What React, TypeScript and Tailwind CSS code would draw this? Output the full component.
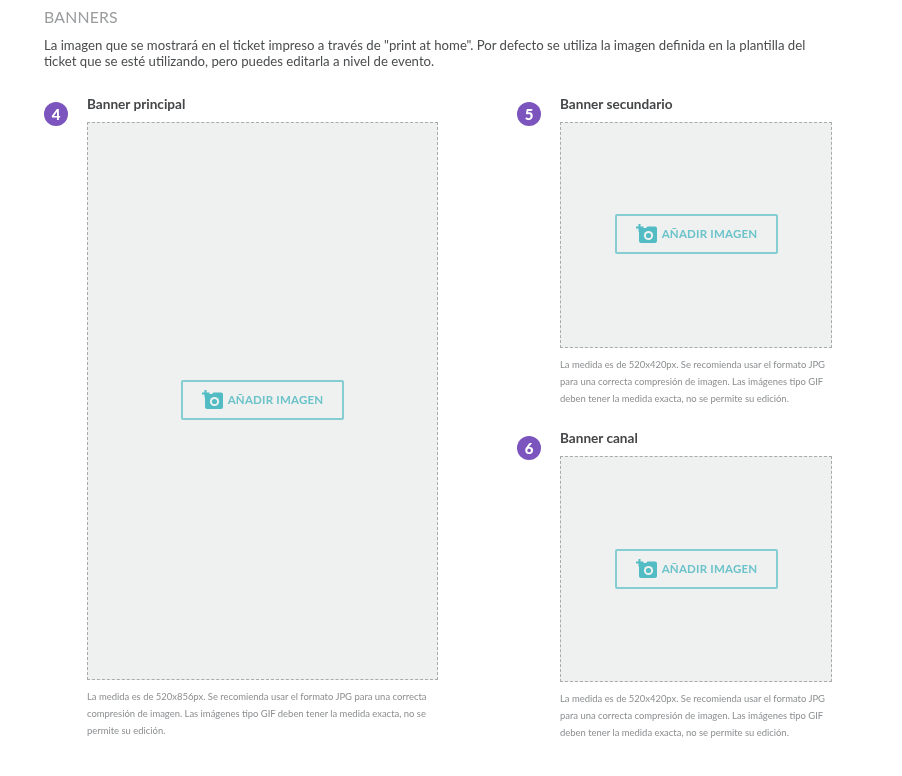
import React from "react";

function AddImage() {
  return (
    <button className="flex h-[40px] w-[163px] items-center justify-center gap-[3px] rounded-[2px] border-2 border-[#84cdd3] bg-[#eff1f0]">
      <svg width="23" height="20" viewBox="0 0 23 20" className="mb-[1px]">
        <path d="M3 4 H10 L11.5 2.5 H19 Q21 2.5 21 4.5 V17 Q21 19 19 19 H5 Q3 19 3 17 Z" fill="#52bcc4" />
        <path d="M3.5 0 V7.5 M0 3.5 H7.5" stroke="#52bcc4" strokeWidth="2" />
        <circle cx="12.5" cy="11.5" r="4.6" fill="#eff1f0" />
        <circle cx="12.5" cy="11.5" r="2.6" fill="#52bcc4" />
      </svg>
      <span className="text-[11.5px] font-bold tracking-[0.2px] text-[#6cc3ca]">AÑADIR IMAGEN</span>
    </button>
  );
}

function Badge({ n }: { n: number }) {
  return (
    <div className="flex h-[24px] w-[24px] shrink-0 items-center justify-center rounded-full bg-[#7b54bd] text-[15px] font-black text-white">
      {n}
    </div>
  );
}

function Banner({ n, title, boxClass, widthClass, caption }: { n: number; title: string; boxClass: string; widthClass: string; caption: React.ReactNode }) {
  return (
    <div className="flex gap-[19px]">
      <div className="pt-[6px]">
        <Badge n={n} />
      </div>
      <div className={widthClass}>
        <h3 className="h-[26px] text-[13.6px] font-bold leading-[17px] text-[#444648]">{title}</h3>
        <div className={`flex items-center justify-center border border-dashed border-[#a9abab] bg-[#eff1f0] ${boxClass}`}>
          <AddImage />
        </div>
        <p className="mt-[8px] whitespace-nowrap text-[9.45px] leading-[17px] text-[#8c8e90]">{caption}</p>
      </div>
    </div>
  );
}

export default function App() {
  return (
    <div className="h-[776px] w-[902px] overflow-hidden bg-white pl-[44px] pt-[8px] blur-[0.3px] [font-family:'Lato','Liberation_Sans',sans-serif]">
      <h2 className="text-[15.8px] leading-[17px] tracking-[0.2px] text-[#9a9c9e]">BANNERS</h2>
      <p className="mt-[12px] whitespace-nowrap text-[13.2px] leading-[16px] text-[#4b4d4f]">
        La imagen que se mostrará en el ticket impreso a través de "print at home". Por defecto se utiliza la imagen definida en la plantilla del<br />ticket que se esté utilizando, pero puedes editarla a nivel de evento.
      </p>
      <div className="mt-[27px] flex">
        <div className="w-[473px]">
          <Banner
            n={4}
            title="Banner principal"
            boxClass="h-[558px] pb-[2px]"
            widthClass="w-[351px]"
            caption={<>La medida es de 520x856px. Se recomienda usar el formato JPG para una correcta<br />compresión de imagen. Las imágenes tipo GIF deben tener la medida exacta, no se<br />permite su edición.</>}
          />
        </div>
        <div className="flex flex-col gap-[23px]">
          <Banner
            n={5}
            title="Banner secundario"
            boxClass="h-[226px] pl-[1px] pb-[2px]"
            widthClass="w-[272px]"
            caption={<>La medida es de 520x420px. Se recomienda usar el formato JPG<br />para una correcta compresión de imagen. Las imágenes tipo GIF<br />deben tener la medida exacta, no se permite su edición.</>}
          />
          <Banner
            n={6}
            title="Banner canal"
            boxClass="h-[226px] pl-[1px]"
            widthClass="w-[272px]"
            caption={<>La medida es de 520x420px. Se recomienda usar el formato JPG<br />para una correcta compresión de imagen. Las imágenes tipo GIF<br />deben tener la medida exacta, no se permite su edición.</>}
          />
        </div>
      </div>
    </div>
  );
}
